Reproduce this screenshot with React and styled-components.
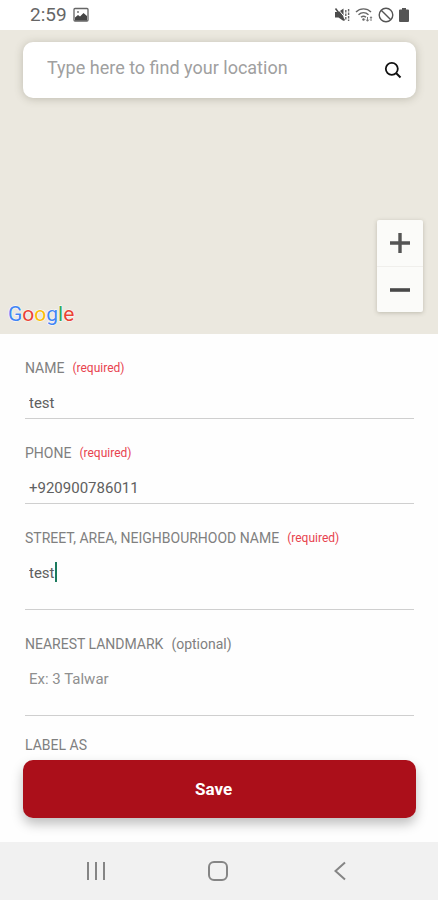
import React, { useState } from 'react'
import styled, { createGlobalStyle } from "styled-components"

function App() {
  const [form, setForm] = useState({
    name: "test",
    phone: "+920900786011",
    street: "test",
    landmark: "",
  })

  const change = (e) => setForm({ ...form, [e.target.name]: e.target.value })

  return (
    <Container>
      <GlobalStyle />

      <StatusBar>
        <StatusSide>
          <Time>2:59</Time>
          <PictureIcon />
        </StatusSide>
        <StatusIcons>
          <MuteIcon />
          <WifiIcon />
          <BlockedIcon />
          <BatteryIcon />
        </StatusIcons>
      </StatusBar>

      <Map>
        <SearchBox>
          <SearchInput type="text" aria-label="Location" placeholder="Type here to find your location" />
          <SearchButton type="button" aria-label="Search">
            <SearchIcon />
          </SearchButton>
        </SearchBox>
        <MapFooter>
          <Logo>
            <Letter $color="#4285f4">G</Letter>
            <Letter $color="#ea4335">o</Letter>
            <Letter $color="#fbbc05">o</Letter>
            <Letter $color="#4285f4">g</Letter>
            <Letter $color="#34a853">l</Letter>
            <Letter $color="#ea4335">e</Letter>
          </Logo>
          <Zoom>
            <ZoomButton type="button" aria-label="Zoom in">
              <svg width="20" height="20" viewBox="0 0 20 20">
                <path d="M10 0V20M0 10H20" stroke="#555" strokeWidth="3.4" />
              </svg>
            </ZoomButton>
            <ZoomButton type="button" aria-label="Zoom out">
              <svg width="20" height="20" viewBox="0 0 20 20">
                <path d="M0 10H20" stroke="#484848" strokeWidth="3.6" />
              </svg>
            </ZoomButton>
          </Zoom>
        </MapFooter>
      </Map>

      <Form onSubmit={(e) => e.preventDefault()}>
        <Field>
          <Label htmlFor="name">NAME <Required>(required)</Required></Label>
          <Control>
            <Input id="name" name="name" value={form.name} onChange={change} />
          </Control>
        </Field>
        <Field>
          <Label htmlFor="phone">PHONE <Required>(required)</Required></Label>
          <Control>
            <Input id="phone" name="phone" type="tel" value={form.phone} onChange={change} />
          </Control>
        </Field>
        <Field>
          <Label htmlFor="street">STREET, AREA, NEIGHBOURHOOD NAME <Required>(required)</Required></Label>
          <Control $tall>
            <FitTextArea id="street" name="street" rows="1" value={form.street} onChange={change} />
            <Caret />
          </Control>
        </Field>
        <Field $last>
          <Label htmlFor="landmark">NEAREST LANDMARK <span>(optional)</span></Label>
          <Control $tall>
            <TextArea id="landmark" name="landmark" placeholder="Ex: 3 Talwar" value={form.landmark} onChange={change} />
          </Control>
        </Field>
        <SectionTitle>LABEL AS</SectionTitle>
        <SaveButton type="submit">Save</SaveButton>
      </Form>

      <NavBar>
        <NavButton type="button" aria-label="Recents">
          <svg width="20" height="20" viewBox="0 0 20 20">
            <path d="M2 1V19M10 1V19M18 1V19" stroke="#858585" strokeWidth="2" />
          </svg>
        </NavButton>
        <NavButton type="button" aria-label="Home">
          <svg width="20" height="20" viewBox="0 0 20 20" fill="none">
            <rect x="1" y="1" width="18" height="18" rx="5" stroke="#858585" strokeWidth="2" />
          </svg>
        </NavButton>
        <NavButton type="button" aria-label="Back">
          <svg width="20" height="20" viewBox="0 0 20 20" fill="none">
            <path d="M15 1.5L5.5 10L15 18.5" stroke="#858585" strokeWidth="2" />
          </svg>
        </NavButton>
      </NavBar>
    </Container>
  )
}

export default App

function PictureIcon() {
  return (
    <svg width="16" height="16" viewBox="0 0 16 16" fill="none">
      <rect x="1" y="1.5" width="14" height="12.5" rx="1" stroke="#666" strokeWidth="1.3" />
      <path d="M2 13.5V10.5L5 8L7 9.5L10.5 6L14 9V13.5Z" fill="#444" />
      <circle cx="5" cy="5" r="1" fill="#777" />
    </svg>
  )
}

function MuteIcon() {
  return (
    <svg width="16" height="16" viewBox="0 0 16 16" fill="none">
      <path d="M1 5H4.5L9.5 1.5V14L4.5 10.5H1Z" fill="#4c4c4c" />
      <path d="M3.5 1.5L11 10.5" stroke="#fff" strokeWidth="1" />
      <path d="M1.5 1.5L10.5 13.5" stroke="#4c4c4c" strokeWidth="1.5" />
      <path d="M11.8 3V13M14.6 2V14" stroke="#666" strokeWidth="1.4" strokeDasharray="2.6 0.9" />
    </svg>
  )
}

function WifiIcon() {
  return (
    <svg width="18" height="16" viewBox="0 0 18 16" fill="none">
      <path d="M1 5C5 0.8 12 0.8 16 5M3.5 7.7C6.5 5 10.5 5 13.5 7.7M6 10.3C7.5 9 9.5 9 11 10.3" stroke="#666" strokeWidth="1.4" />
      <circle cx="8.5" cy="12.5" r="1.2" fill="#666" />
      <path d="M12.5 10V14M11 12.5L12.5 14.3L14 12.5M16 14V10M15 11L16 9.7L17 11" stroke="#777" strokeWidth="1" />
    </svg>
  )
}

function BlockedIcon() {
  return (
    <svg width="16" height="16" viewBox="0 0 16 16" fill="none">
      <circle cx="8" cy="8" r="6.8" stroke="#555" strokeWidth="1.4" />
      <path d="M3.2 3.2L12.8 12.8" stroke="#555" strokeWidth="1.4" />
    </svg>
  )
}

function BatteryIcon() {
  return (
    <svg width="10" height="16" viewBox="0 0 10 16">
      <path d="M3 1H7V2.5H9Q10 2.5 10 3.5V14Q10 15 9 15H1Q0 15 0 14V3.5Q0 2.5 1 2.5H3Z" fill="#555" />
    </svg>
  )
}

function SearchIcon() {
  return (
    <svg width="18" height="18" viewBox="0 0 18 18" fill="none">
      <circle cx="7.8" cy="7.8" r="6" stroke="#111" strokeWidth="1.8" />
      <path d="M12 12L16.5 16.5" stroke="#111" strokeWidth="2" />
    </svg>
  )
}

const GlobalStyle = createGlobalStyle`
*{
  box-sizing: border-box;
}

body{
  margin: 0;
  background: #fefefe;
  font-family: Roboto, "Liberation Sans", sans-serif;
}

button, input, textarea{
  font-family: inherit;
  border: none;
  outline: none;
  margin: 0;
  padding: 0;
  background: none;
}

svg{
  display: block;
}
`

const Container = styled.div`
display: flex;
flex-direction: column;
min-height: 100vh;
`

const StatusBar = styled.header`
display: flex;
justify-content: space-between;
align-items: center;
height: 30px;
padding: 0 29px 0 30px;
background: white;
`

const StatusSide = styled.div`
display: flex;
align-items: center;
gap: 6px;
`

const StatusIcons = styled.div`
display: flex;
align-items: center;
gap: 5px;
`

const Time = styled.span`
color: #666;
font-size: 19px;
line-height: 20px;
`

const Map = styled.section`
display: flex;
flex-direction: column;
justify-content: space-between;
height: 304px;
padding: 12px 15px 22px 8px;
background: #ebe8df;
`

const SearchBox = styled.div`
display: flex;
align-items: center;
height: 56px;
margin: 0 7px 0 15px;
padding: 0 14px 0 24px;
border-radius: 10px;
background: white;
box-shadow: 0 1px 8px rgba(90, 85, 65, 0.3);
`

const SearchInput = styled.input`
flex: 1;
min-width: 0;
height: 40px;
padding-bottom: 6px;
color: #555;
font-size: 18px;

&::placeholder{
  color: #a0a0a0;
  opacity: 1;
}
`

const SearchButton = styled.button`
cursor: pointer;
`

const MapFooter = styled.div`
display: flex;
justify-content: space-between;
align-items: flex-end;
`

const Logo = styled.div`
display: flex;
font-size: 21px;
line-height: 20px;
-webkit-text-stroke: 1px white;
paint-order: stroke fill;
margin-bottom: -12px;
`

const Letter = styled.span`
color: ${({ $color }) => $color};
`

const Zoom = styled.div`
width: 46px;
border-radius: 2px;
background: #fbfbf9;
box-shadow: 0 1px 4px rgba(90, 85, 65, 0.3);
`

const ZoomButton = styled.button`
display: flex;
justify-content: center;
align-items: center;
width: 100%;
height: 46px;
cursor: pointer;

& + &{
  border-top: 1px solid #f0efec;
}
`

const Form = styled.form`
display: flex;
flex: 1;
flex-direction: column;
padding: 26px 24px 24px 25px;
`

const Field = styled.div`
display: flex;
flex-direction: column;
gap: 12px;
padding-bottom: ${({ $last }) => ($last ? "21px" : "26px")};
`

const Label = styled.label`
display: flex;
gap: 8px;
color: #808080;
font-size: 14px;
line-height: 16px;
`

const Required = styled.span`
color: #e8434f;
font-size: 12px;
`

const Control = styled.div`
display: flex;
height: ${({ $tall }) => ($tall ? "52px" : "31px")};
padding-left: 4px;
border-bottom: 1px solid #cfcfcf;
`

const Input = styled.input`
flex: 1;
min-width: 0;
color: #606060;
font-size: 15px;
`

const TextArea = styled.textarea`
flex: 1;
min-width: 0;
padding-top: 6px;
color: #606060;
font-size: 15px;
line-height: 18px;
resize: none;

&::placeholder{
  color: #8f8f8f;
  opacity: 1;
}
`

const FitTextArea = styled(TextArea)`
flex: none;
max-width: 100%;
field-sizing: content;
overflow: hidden;
caret-color: transparent;
`

const Caret = styled.span`
width: 2px;
height: 20px;
margin-top: 4px;
background: #1b7a5e;
`

const SectionTitle = styled.div`
color: #808080;
font-size: 14px;
line-height: 16px;
`

const SaveButton = styled.button`
height: 58px;
margin: 7px -2px 0;
padding-right: 12px;
border-radius: 10px;
background: #ab0f1a;
color: white;
font-size: 17px;
font-weight: bold;
box-shadow: 0 6px 12px rgba(0, 0, 0, 0.25);
cursor: pointer;
`

const NavBar = styled.nav`
display: flex;
justify-content: center;
align-items: center;
gap: 102px;
height: 58px;
padding-right: 3px;
background: #f1f1f1;
`

const NavButton = styled.button`
cursor: pointer;
`
